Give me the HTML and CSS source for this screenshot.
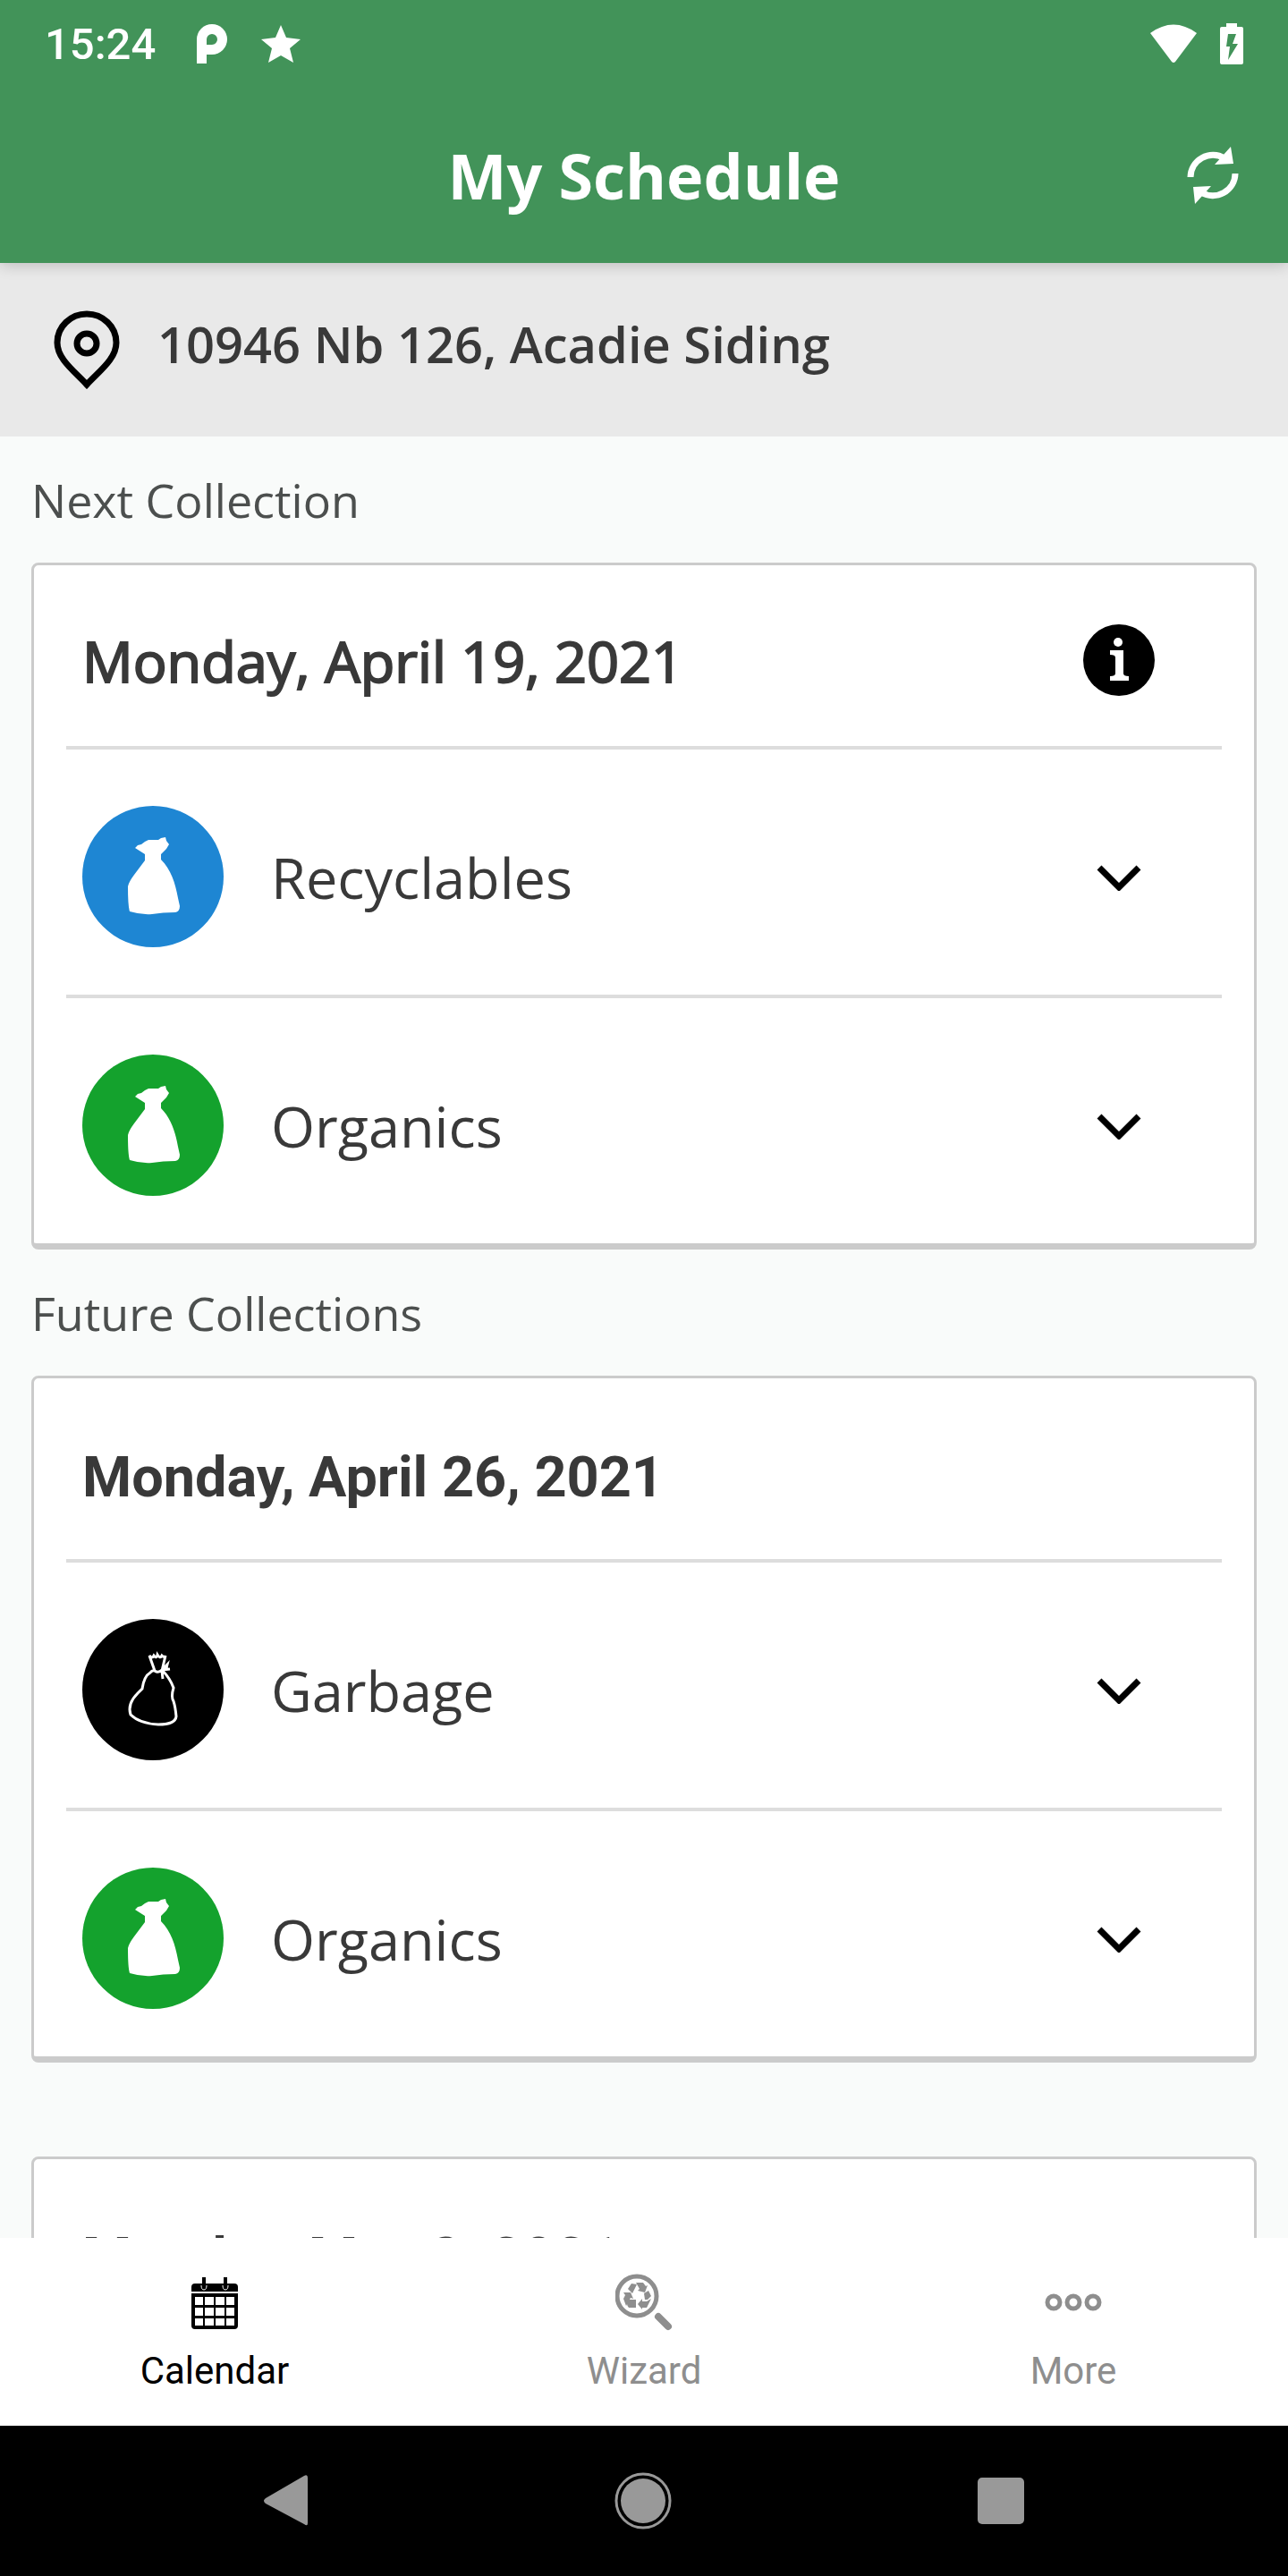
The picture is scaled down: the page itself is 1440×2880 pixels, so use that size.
FILE: index.html
```html
<!DOCTYPE html>
<html lang="en">
<head>
  <meta charset="UTF-8">
  <meta name="viewport" content="width=device-width, initial-scale=1.0">
  <title>My Schedule</title>
  <link rel="stylesheet" href="styles.css">
</head>
<body>

  <!-- Shared shapes -->
  <svg class="sprite" aria-hidden="true">
    <symbol id="bag" viewBox="0 0 158 158">
      <path fill="#fff" d="M59 47 L62 44 L66 43 L70 40 L74 38 L85 38 L88 36 L93 35 L94 39 L97 43 L94 48 L88 54 L88 60 C99 71 104 86 107 103 L109 112 Q109 118 104 119 Q90 119 78 121 Q66 122 53 118 Q51 112 51 90 Q52 85 58 77 L70 61 L70 54 Z"/>
    </symbol>
    <symbol id="chevron" viewBox="0 0 52 32">
      <path d="M4 6 L26 28 L48 6" fill="none" stroke="#000" stroke-width="7"/>
    </symbol>
  </svg>

  <header class="app-header">
    <div class="status-bar">
      <span class="clock">15:24</span>
      <svg class="icon-p" viewBox="0 0 34 44"><path fill="#fff" fill-rule="evenodd" d="M0 44 V17 A17 17 0 1 1 17 34 H11 V44 Z M11 23 H17 A6 6 0 1 0 11 17 Z"/></svg>
      <svg class="icon-star" viewBox="0 0 44 42"><path fill="#fff" d="M22 0 L28 14 L44 16 L32 26 L36 42 L22 34 L8 42 L12 26 L0 16 L16 14 Z"/></svg>
      <svg class="icon-wifi" viewBox="0 0 54 44"><path fill="#fff" d="M1 10 Q27 -9 53 10 L29 42 Q27 44 25 42 Z"/></svg>
      <svg class="icon-battery" viewBox="0 0 26 46"><path fill="#fff" fill-rule="evenodd" d="M7 0 H19 V4 H24 Q26 4 26 6 V44 Q26 46 24 46 H2 Q0 46 0 44 V6 Q0 4 2 4 H7 Z M9 12 L7 26 H11 L9 41 L20 23 H14 L18 12 Z"/></svg>
    </div>
    <div class="title-bar">
      <h1>My Schedule</h1>
      <button type="button" class="refresh" aria-label="Refresh">
        <svg viewBox="0 0 60 64">
          <path d="M5 34 A25 25 0 0 1 43 13 M55 30 A25 25 0 0 1 17 51" fill="none" stroke="#fff" stroke-width="7"/>
          <path fill="#fff" d="M50 0 L53 19 L32 20 Z M10 64 L8 45 L28 44 Z"/>
        </svg>
      </button>
    </div>
  </header>

  <section class="address">
    <svg viewBox="0 0 74 88"><path d="M37 83 C22 67 4 54 4 36 A33 32 0 0 1 70 36 C70 54 52 67 37 83 Z" fill="none" stroke="#000" stroke-width="7"/><circle cx="37" cy="37" r="11" fill="none" stroke="#000" stroke-width="7"/></svg>
    <span>10946 Nb 126, Acadie Siding</span>
  </section>

  <main class="schedule">
    <h2>Next Collection</h2>
    <article class="card next">
      <div class="card-head">
        <h3>Monday, April 19, 2021</h3>
        <button type="button" class="info" aria-label="Information">
          <svg viewBox="0 0 80 80"><circle cx="40" cy="40" r="40"/><circle cx="39" cy="20" r="5" fill="#fff"/><path fill="#fff" d="M30 29 H45 V55 Q45 58 51 58 V63 H30 V58 Q36 58 36 55 V37 Q36 34 30 34 Z"/></svg>
        </button>
      </div>
      <button type="button" class="item">
        <span class="badge recyclables"><svg><use href="#bag"/></svg></span>
        <span class="name">Recyclables</span>
        <svg class="chevron"><use href="#chevron"/></svg>
      </button>
      <button type="button" class="item">
        <span class="badge organics"><svg><use href="#bag"/></svg></span>
        <span class="name">Organics</span>
        <svg class="chevron"><use href="#chevron"/></svg>
      </button>
    </article>

    <h2>Future Collections</h2>
    <article class="card">
      <div class="card-head">
        <h3>Monday, April 26, 2021</h3>
      </div>
      <button type="button" class="item">
        <span class="badge garbage">
          <svg viewBox="0 0 158 158">
            <path d="M81 58 L75 41 Q78 45 80 41 Q83 45 84 40 Q87 45 89 41 Q92 44 93 41 L89 58 M81 58 Q85 61 89 57 Q98 66 102 77 Q99 87 102 92 Q104 98 105 109 Q104 118 85 118 Q64 117 54 107 Q50 95 62 83 L67 78 Q69 64 76 60 Q78 57 81 58 M89 57 L95 51 L94 55 L89 57 L98 56 M89 58 L90 67" fill="none" stroke="#fff" stroke-width="3"/>
          </svg>
        </span>
        <span class="name">Garbage</span>
        <svg class="chevron"><use href="#chevron"/></svg>
      </button>
      <button type="button" class="item">
        <span class="badge organics"><svg><use href="#bag"/></svg></span>
        <span class="name">Organics</span>
        <svg class="chevron"><use href="#chevron"/></svg>
      </button>
    </article>

    <article class="card later">
      <div class="card-head">
        <h3>Monday, May 3, 2021</h3>
      </div>
    </article>
  </main>

  <footer>
    <nav class="tabs">
      <a href="#calendar" class="active">
        <svg viewBox="0 0 64 64">
          <path d="M6 15 Q6 11 10 11 H54 Q58 11 58 15 V20 H6 Z"/>
          <path fill-rule="evenodd" d="M6 22 H58 V58 Q58 62 54 62 H10 Q6 62 6 58 Z M10 26 V35 H19 V26 Z M21 26 V35 H31 V26 Z M33 26 V35 H43 V26 Z M45 26 V35 H54 V26 Z M10 38 V47 H19 V38 Z M21 38 V47 H31 V38 Z M33 38 V47 H43 V38 Z M45 38 V47 H54 V38 Z M10 50 V58 H19 V50 Z M21 50 V58 H31 V50 Z M33 50 V58 H43 V50 Z M45 50 V58 H54 V50 Z"/>
          <path d="M17 13 Q17 18 20 18 Q23 18 23 13 M41 13 Q41 18 44 18 Q47 18 47 13" fill="none" stroke="#fff" stroke-width="1"/>
          <path d="M20 4 V15 M44 4 V15" stroke="#000" stroke-width="4"/>
        </svg>
        Calendar
      </a>
      <a href="#wizard">
        <svg viewBox="0 0 64 64">
          <circle cx="24" cy="25" r="22" fill="none" stroke="#8e8e8e" stroke-width="5"/>
          <path d="M48 48 L59 59" stroke="#8e8e8e" stroke-width="8" stroke-linecap="round"/>
          <path fill="#8e8e8e" d="M14 17 L18 11 L24 12 L19 22 Z M20 10 H31 L34 14 L36 13 L33 21 L25 19 L27 17 L23 10 Z M32 22 L37 19 L40 25 L36 29 H33 Z M40 28 L35 38 H30 V40 L25 34 L30 28 V31 H35 Z M14 29 H23 V38 H15 Q11 33 14 29 Z M9 21 H17 L20 28 L17 27 L12 36 L9 28 L11 24 Z"/>
        </svg>
        Wizard
      </a>
      <a href="#more">
        <svg viewBox="0 0 64 64" fill="none" stroke="#8e8e8e" stroke-width="5"><circle cx="10" cy="32" r="7"/><circle cx="32" cy="32" r="7"/><circle cx="54" cy="32" r="7"/></svg>
        More
      </a>
    </nav>
    <div class="system-nav">
      <button type="button" aria-label="Back"><svg viewBox="0 0 64 64"><path fill="#999" d="M53 4 Q57 2 57 6 V57 Q57 61 53 58 L10 35 Q6 32 10 29 Z"/></svg></button>
      <button type="button" aria-label="Home"><svg viewBox="0 0 64 64"><circle cx="32" cy="32" r="30" fill="none" stroke="#999" stroke-width="3"/><circle cx="32" cy="32" r="25" fill="#999"/></svg></button>
      <button type="button" aria-label="Recent apps"><svg viewBox="0 0 64 64"><rect x="6" y="6" width="52" height="52" rx="5" fill="#999"/></svg></button>
    </div>
  </footer>

</body>
</html>
```
FILE: styles.css
```css
* { margin: 0; padding: 0; box-sizing: border-box; }
body {
  height: 100vh;
  display: flex;
  flex-direction: column;
  overflow: hidden;
  font-family: 'Open Sans', sans-serif;
  background-color: #F9FBFA;
  color: #393939;
}
button {
  background: none;
  border: none;
  font: inherit;
  color: inherit;
  cursor: pointer;
}
svg {
  display: block;
}
.sprite {
  position: absolute;
  width: 0;
  height: 0;
}

/* Header */
.app-header {
  position: relative;
  z-index: 1;
  background: #429359;
  color: white;
  box-shadow: 0 2px 16px rgba(0, 0, 0, 0.2);
}
.status-bar {
  display: flex;
  align-items: center;
  height: 98px;
  padding: 0 50px;
}
.clock {
  font-family: Roboto, sans-serif;
  font-size: 49px;
  font-weight: 500;
  margin-right: 46px;
}
.icon-p { width: 34px; height: 44px; }
.icon-star { width: 44px; height: 42px; margin-left: 38px; }
.icon-wifi { width: 54px; height: 44px; margin-left: auto; }
.icon-battery { width: 26px; height: 46px; margin-left: 25px; }
.title-bar {
  display: grid;
  grid-template-columns: 1fr auto 1fr;
  align-items: center;
  height: 196px;
  padding: 0 54px;
}
h1 {
  grid-column: 2;
  font-size: 70px;
  font-weight: 700;
}
.refresh {
  justify-self: end;
}
.refresh svg {
  width: 60px;
  height: 64px;
}

/* Address */
.address {
  flex-shrink: 0;
  display: flex;
  align-items: center;
  gap: 42px;
  height: 194px;
  padding: 0 60px;
  background: #E9E9E9;
  font-size: 56px;
  font-weight: 600;
}
.address span {
  padding-bottom: 14px;
}
.address svg {
  width: 74px;
  height: 88px;
}

/* Schedule */
.schedule {
  flex: 1;
  min-height: 0;
  overflow: hidden;
  padding: 0 35px;
}
h2 {
  height: 141px;
  line-height: 141px;
  font-size: 52px;
  font-weight: 400;
  color: #4C4F4E;
}
.card {
  padding: 0 36px;
  background: white;
  border: 3px solid #CBCBCB;
  border-bottom-width: 7px;
  border-radius: 8px;
}
.later {
  margin-top: 105px;
}
.card-head {
  display: flex;
  align-items: center;
  justify-content: space-between;
  height: 202px;
  padding: 10px 75px 0 18px;
}
h3 {
  padding-top: 8px;
  font-family: Roboto, sans-serif;
  font-size: 63px;
  font-weight: 700;
}
.next h3 {
  padding-top: 0;
  font-family: 'Open Sans', sans-serif;
  font-weight: 400;
  -webkit-text-stroke: 2px #393939;
}
.info svg {
  width: 80px;
  height: 80px;
}
.item {
  display: flex;
  align-items: center;
  width: 100%;
  height: 278px;
  padding: 10px 89px 0 18px;
  border-top: 4px solid #DDDDDD;
  text-align: left;
}
.badge {
  width: 158px;
  height: 158px;
  border-radius: 50%;
}
.badge svg {
  width: 158px;
  height: 158px;
}
.recyclables { background: #1E86D3; }
.organics { background: #14A22D; }
.garbage { background: black; }
.name {
  flex: 1;
  margin-left: 53px;
  font-size: 63px;
}
.chevron {
  width: 52px;
  height: 32px;
}

/* Bottom bars */
.tabs {
  display: grid;
  grid-template-columns: repeat(3, 1fr);
  height: 210px;
  background: white;
}
.tabs a {
  display: flex;
  flex-direction: column;
  align-items: center;
  gap: 20px;
  padding-top: 40px;
  font-family: Roboto, sans-serif;
  font-size: 42px;
  color: #8E8E8E;
  text-decoration: none;
}
.tabs .active {
  color: black;
}
.tabs svg,
.system-nav svg {
  width: 64px;
  height: 64px;
}
.system-nav {
  display: flex;
  justify-content: center;
  align-items: center;
  gap: 336px;
  height: 168px;
  padding-right: 3px;
  background: black;
}
```
